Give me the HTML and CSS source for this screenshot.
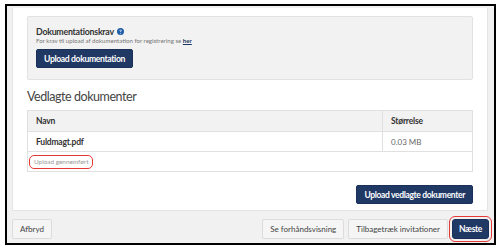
FILE: index.html
```html
<!DOCTYPE html>
<html lang="da">
<head>
    <meta charset="UTF-8">
    <meta name="viewport" content="width=device-width, initial-scale=1.0">
    <title>Vedlagte dokumenter</title>
    <link rel="stylesheet" href="styles.css">
</head>
<body>
    <div class="frame">
        <div class="card">
            <div class="req-box">
                <div class="req-title">
                    Dokumentationskrav
                    <svg class="help-icon" viewBox="0 0 16 16" width="7" height="7">
                        <circle cx="8" cy="8" r="8" fill="#1f5ea8"/>
                        <path d="M5.6 6.1c0-1.4 1.1-2.3 2.5-2.3s2.4.9 2.4 2.1c0 1.6-1.8 1.8-1.8 3.1v.4H7.1v-.5c0-1.8 1.7-2 1.7-2.9 0-.5-.3-.8-.8-.8-.6 0-.9.4-.9 1H5.6z" fill="#fff"/>
                        <circle cx="8" cy="11.9" r="1.1" fill="#fff"/>
                    </svg>
                </div>
                <div class="req-text">For krav til upload af dokumentation for registrering se <a href="#">her</a></div>
                <button class="btn btn-primary">Upload dokumentation</button>
            </div>

            <h2 class="section-title">Vedlagte dokumenter</h2>

            <table class="docs">
                <thead>
                    <tr>
                        <th>Navn</th>
                        <th class="col-size">Størrelse</th>
                    </tr>
                </thead>
                <tbody>
                    <tr>
                        <td class="file-name">Fuldmagt.pdf</td>
                        <td class="col-size file-size">0.03 MB</td>
                    </tr>
                    <tr>
                        <td colspan="2" class="status-cell"><span class="status marked">Upload gennemført</span></td>
                    </tr>
                </tbody>
            </table>

            <div class="card-actions">
                <button class="btn btn-primary">Upload vedlagte dokumenter</button>
            </div>
        </div>

        <div class="footer">
            <button class="btn btn-light">Afbryd</button>
            <div class="footer-right">
                <button class="btn btn-light">Se forhåndsvisning</button>
                <button class="btn btn-light">Tilbagetræk invitationer</button>
                <button class="btn btn-primary btn-next marked">Næste</button>
            </div>
        </div>
    </div>
</body>
</html>
```

FILE: styles.css
```css
* {
    box-sizing: border-box;
}
body {
    margin: 0;
    background-color: #fff;
    font-family: Lato, "Open Sans", sans-serif;
    color: #333;
}
.frame {
    margin: 4px 5px;
    width: 491px;
    height: 241px;
    border: 2px solid #000;
    background-color: #f1f1f1;
    display: flex;
    flex-direction: column;
}
.card {
    margin: 2px 6px 0 5px;
    padding: 8px 14px 8px 14px;
    background-color: #fff;
    border: 1px solid #e4e4e4;
    border-top: none;
    height: 203px;
}
.req-box {
    background-color: #f2f2f2;
    border: 1px solid #e2e2e2;
    border-radius: 2px;
    padding: 9px 8px 11px 8px;
    height: 64px;
}
.req-title {
    font-size: 8.8px;
    font-weight: bold;
    line-height: 11px;
    letter-spacing: -0.25px;
    color: #333;
    display: flex;
    align-items: center;
    gap: 3px;
}
.req-text {
    font-size: 6.1px;
    line-height: 8px;
    color: #777;
}
.req-text a {
    color: #1d3661;
    font-weight: bold;
}
.btn {
    font-family: inherit;
    font-size: 8px;
    border-radius: 2px;
    height: 20px;
    padding: 0 7px;
    cursor: pointer;
}
.btn-primary {
    background-color: #1f3864;
    color: #fff;
    border: 1px solid #1a3059;
    font-weight: bold;
    font-size: 8.5px;
    letter-spacing: -0.35px;
}
.btn-light {
    background-color: #f5f5f5;
    color: #444;
    border: 1px solid #dcdcdc;
}
.btn-next {
    padding: 0 6px;
}
.req-box .btn {
    margin-top: 4px;
    height: 19px;
    font-size: 8.6px;
    padding: 0 7px;
}
.section-title {
    font-size: 12.5px;
    font-weight: normal;
    color: #444;
    line-height: 14px;
    letter-spacing: -0.45px;
    margin: 10px 0 6px 0;
}
.docs {
    width: 100%;
    border-collapse: collapse;
    font-size: 8.5px;
}
.docs th,
.docs td {
    border: 1px solid #e0e0e0;
    text-align: left;
    padding: 0 8px;
}
.docs th {
    background-color: #f2f2f2;
    height: 21px;
    font-weight: bold;
    letter-spacing: -0.2px;
    color: #333;
}
.docs td {
    height: 20px;
}
.col-size {
    width: 90px;
}
.file-name {
    font-weight: bold;
    letter-spacing: -0.2px;
}
.file-size {
    color: #666;
    font-size: 8px;
}
.docs .status-cell {
    padding: 0 3px;
}
.status {
    display: inline-block;
    font-size: 6.4px;
    color: #999;
    padding: 1px 3px;
    line-height: 8px;
}
.marked {
    outline: 1.5px solid #e53935;
    outline-offset: 2px;
    border-radius: 3px;
}
.status.marked {
    outline-offset: 1px;
}
.card-actions {
    display: flex;
    justify-content: flex-end;
    margin-top: 13px;
}
.card-actions .btn {
    height: 19px;
}
.footer {
    display: flex;
    justify-content: space-between;
    padding: 8px 5px 4px 5px;
}
.footer-right {
    display: flex;
    gap: 4px;
}
```
